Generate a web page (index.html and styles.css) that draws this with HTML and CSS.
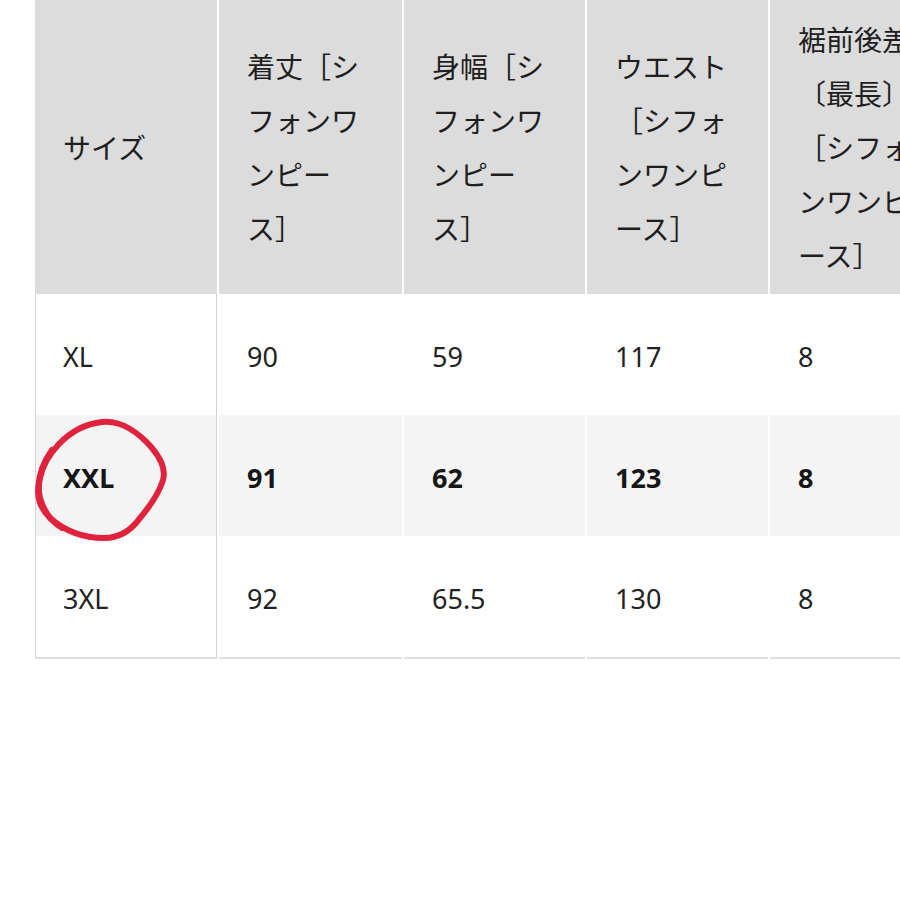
FILE: index.html
```html
<!DOCTYPE html>
<html lang="ja">
<head>
<meta charset="utf-8">
<title>サイズ表</title>
<link rel="stylesheet" href="styles.css">
</head>
<body>
<div class="wrap">
  <table class="size-table">
    <colgroup>
      <col class="c1"><col class="c2"><col class="c3"><col class="c4"><col class="c5">
    </colgroup>
    <thead>
      <tr>
        <th class="first">サイズ</th>
        <th>着丈［シフォンワンピース］</th>
        <th>身幅［シフォンワンピース］</th>
        <th>ウエスト［シフォンワンピース］</th>
        <th>裾前後差〔最長〕［シフォンワンピース］</th>
      </tr>
    </thead>
    <tbody>
      <tr>
        <td class="first">XL</td><td>90</td><td>59</td><td>117</td><td>8</td>
      </tr>
      <tr class="hl">
        <td class="first">XXL</td><td>91</td><td>62</td><td>123</td><td>8</td>
      </tr>
      <tr class="last">
        <td class="first">3XL</td><td>92</td><td>65.5</td><td>130</td><td>8</td>
      </tr>
    </tbody>
  </table>
  <svg class="mark" width="150" height="140" viewBox="0 0 150 140" aria-hidden="true">
    <path d="M72 8 C92 6 110 20 122 34 C132 46 136 56 133 66 C129 80 120 92 110 104 C100 118 88 124 74 124 C56 124 36 118 20 104 C8 92 6 78 10 64 C14 44 36 12 72 8 Z" fill="none" stroke="#e0233d" stroke-width="6" stroke-linejoin="round"/>
    <path d="M22 36 C12 50 6 66 10 84 C14 98 22 108 32 114" fill="none" stroke="#e0233d" stroke-width="6" stroke-linecap="round"/>
  </svg>
</div>
</body>
</html>
```
FILE: styles.css
```css
html, body {
  margin: 0;
  padding: 0;
  background: #ffffff;
  overflow: hidden;
}

body {
  width: 900px;
  height: 900px;
  font-family: "Noto Sans", "Noto Sans CJK JP", sans-serif;
  color: #1c1c1c;
}

.wrap {
  position: relative;
  width: 900px;
  height: 900px;
  overflow: hidden;
}

.size-table {
  border-collapse: separate;
  border-spacing: 2px 0;
  margin-left: 33px;
  table-layout: fixed;
  width: 939px;
}

.c1 { width: 182px; }
.c2 { width: 183px; }
.c3 { width: 181px; }
.c4 { width: 181px; }
.c5 { width: 200px; }

.size-table th {
  background: #dcdcdc;
  font-family: "Noto Sans CJK JP", sans-serif;
  font-weight: 400;
  font-size: 28px;
  line-height: 54px;
  text-align: left;
  vertical-align: middle;
  height: 270px;
  padding: 12px 40px 12px 28px;
  line-break: normal;
  word-break: normal;
  color: #1e1e1e;
  overflow: hidden;
}

.size-table th.first {
  padding-left: 28px;
}

.size-table td {
  font-family: "Noto Sans", "Noto Sans CJK JP", sans-serif;
  font-size: 27px;
  font-weight: 400;
  height: 117px;
  padding: 4px 20px 0 28px;
  vertical-align: middle;
  color: #222;
  background: #ffffff;
}

.size-table td.first {
  border-left: 1px solid #d4d4d4;
  border-right: 1px solid #d4d4d4;
  padding-left: 27px;
}

.size-table tr.hl td {
  background: #f4f4f4;
  font-weight: 700;
  color: #161616;
}

.size-table tr.last td {
  border-bottom: 2px solid #dedede;
}

.mark {
  position: absolute;
  left: 30px;
  top: 414px;
}
```
